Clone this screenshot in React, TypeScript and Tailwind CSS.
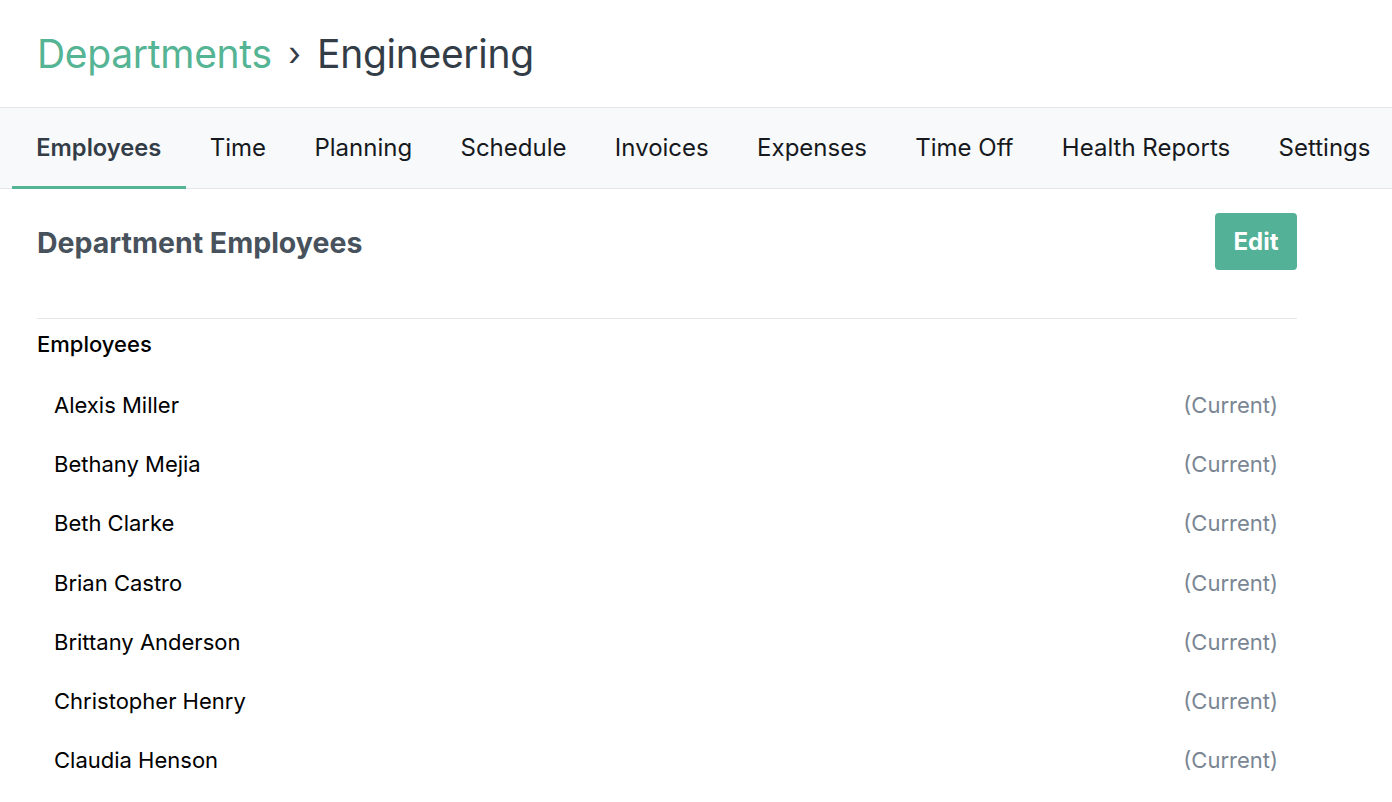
import React from 'react';

const tabs = ['Employees', 'Time', 'Planning', 'Schedule', 'Invoices', 'Expenses', 'Time Off', 'Health Reports', 'Settings'];

const employees = [
  'Alexis Miller',
  'Bethany Mejia',
  'Beth Clarke',
  'Brian Castro',
  'Brittany Anderson',
  'Christopher Henry',
  'Claudia Henson',
];

export default function App() {
  return (
    <div className="min-h-screen bg-white font-['Inter',sans-serif] text-black overflow-hidden">
      {/* Breadcrumb */}
      <div className="h-[107px] flex items-center px-[37px]">
        <h1 className="text-[39px] leading-none tracking-[-0.3px] flex items-center whitespace-nowrap">
          <span className="text-[#55b493]">Departments</span>
          <span className="mx-[16.5px] text-[#333d47] text-[33px]">›</span>
          <span className="text-[#333d47]">Engineering</span>
        </h1>
      </div>

      {/* Tabs */}
      <nav className="h-[82px] bg-[#f8f9fb] border-y border-[#e3e6ea] flex pl-[12px]">
        {tabs.map((t, i) => (
          <div
            key={t}
            className={`relative shrink-0 whitespace-nowrap flex items-center px-[24.2px] ${
              i === 0 ? 'text-[23.7px] font-semibold text-[#333d47]' : 'text-[24px] text-[#16191d]'
            }`}
          >
            {t}
            {i === 0 && <span className="absolute left-0 right-0 bottom-[-1px] h-[3px] bg-[#55b493]" />}
          </div>
        ))}
      </nav>

      {/* Content */}
      <div className="w-[1260px] ml-[37px]">
        <div className="flex items-start justify-between pt-[24px] pb-[48px] border-b border-[#e6e6e6]">
          <h2 className="text-[28.5px] font-bold text-[#48525c] mt-[14px] leading-[32px]">Department Employees</h2>
          <button className="w-[82px] h-[57px] rounded-[4px] bg-[#52b196] text-white text-[24px] font-bold">
            Edit
          </button>
        </div>

        <div className="pt-[10px]">
          <div className="text-[22px] font-medium leading-[30px]">Employees</div>
          <ul className="mt-[17px]">
            {employees.map((e) => (
              <li key={e} className="h-[59.2px] flex items-center justify-between pl-[17px] pr-[19px] text-[22px]">
                <span>{e}</span>
                <span className="text-[#7a8693]">(Current)</span>
              </li>
            ))}
          </ul>
        </div>
      </div>
    </div>
  );
}
